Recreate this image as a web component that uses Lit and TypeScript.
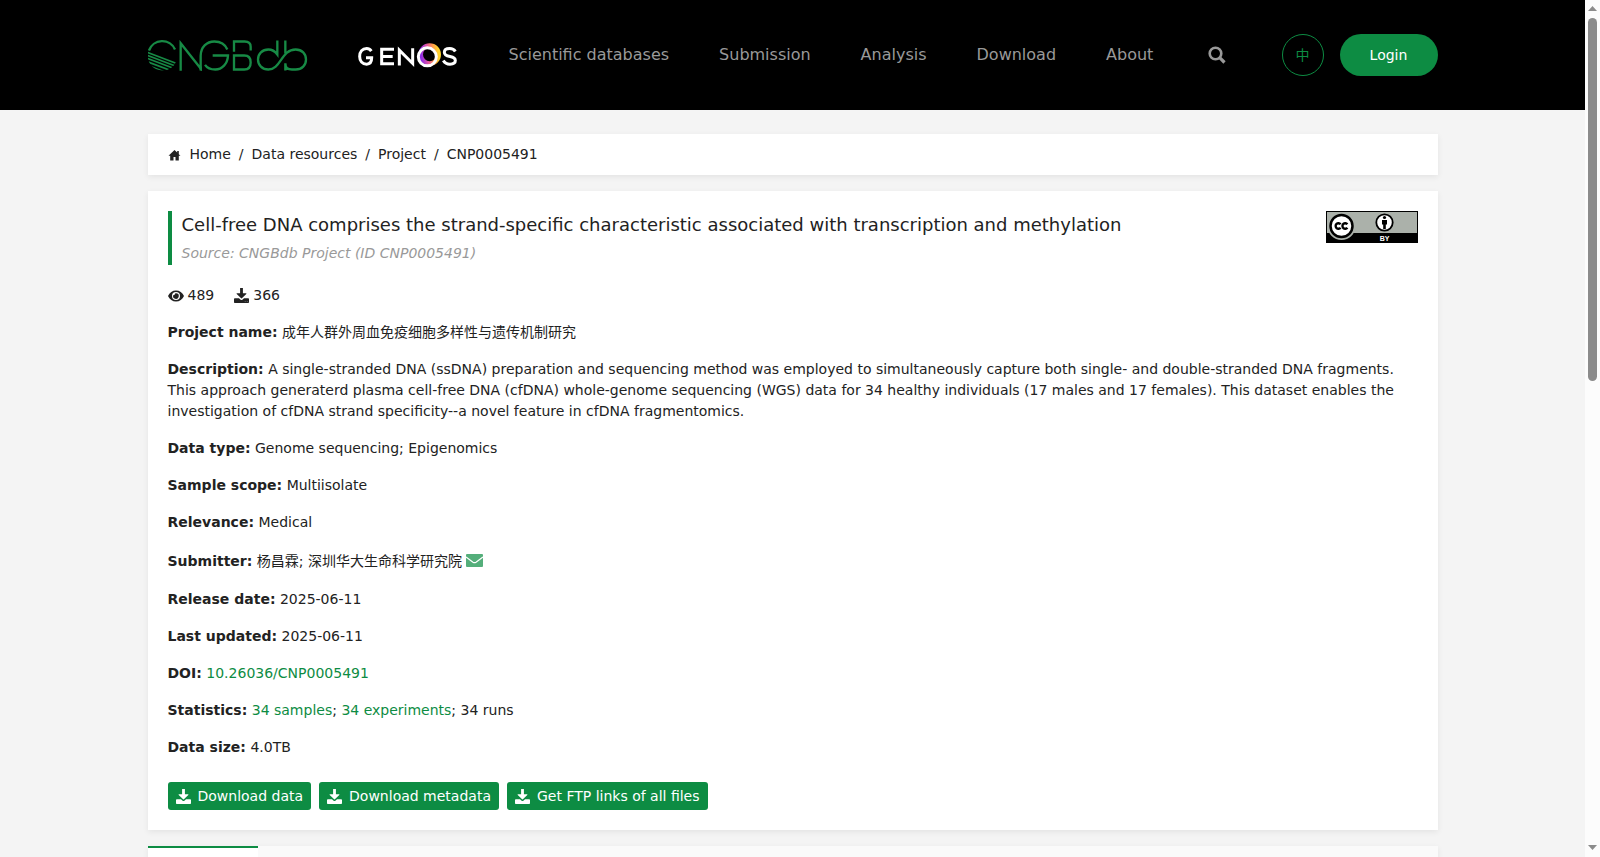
import { LitElement, html, css, svg } from "lit";
import { customElement } from "lit/decorators.js";

const downloadIcon = html`<svg class="icon" viewBox="0 0 16 16" width="15" height="15" aria-hidden="true">
  <path fill="currentColor" d="M6.500 0h3v5.500h3.200c.5 0 .7.5.4.8L8.400 11a.6.6 0 0 1-.8 0L2.900 6.300c-.3-.3-.1-.8.4-.8h3.200z"/>
  <path fill="currentColor" d="M.8 11h4.500l1.500 1.300a1.700 1.700 0 0 0 2.400 0l1.500-1.300h4.500c.4 0 .8.300.8.800v3.400c0 .5-.4.800-.8.800H.8a.8.8 0 0 1-.8-.8v-3.400c0-.5.4-.8.8-.8z"/>
  <path fill="#fff" fill-opacity=".5" d="M11.500 13.800h.8v.8h-.8zM13.700 13.800h.8v.8h-.8z"/>
</svg>`;

const cngbLogo = html`<svg class="logo" viewBox="24 29 480 92" width="160" height="31" role="img" aria-label="CNGBdb">
  <defs><clipPath id="globe"><path d="M23 60H110V90A44 44 0 0 1 66 120A44 44 0 0 1 23 76z"/></clipPath></defs>
  <g fill="none" stroke="#178a45" stroke-width="7">
    <path d="M27 60A42 42 0 0 1 105 57"/>
    <g clip-path="url(#globe)" stroke-width="5">
      ${[65, 74, 83, 93, 104].map((y) => svg`<path d="M20 ${y}L108 ${y + 33}"/>`)}
    </g>
    <path d="M122 121V38L182 114V76C182 50 200 33 223 33C242 33 256 43 262 57"/>
    <path d="M182 108V120M218 75H264C263 100 246 117 226 117C211 117 201 112 195 103"/>
    <path d="M282 64V33H314C326 33 332 39 332 49V60M282 75H313C326 75 332 83 332 96C332 110 325 117 313 117H282Z"/>
    <path d="M412 30V72C404 61 396 57 385 57C367 57 354 70 354 87C354 104 367 117 385 117C423 117 423 57 467 57C486 57 498 70 498 87C498 104 486 117 467 117H456C445 117 436 111 436 98M436 30V68M436 98V120"/>
  </g>
</svg>`;

const genosLogo = html`<svg class="logo" viewBox="654 38 300 74" width="100" height="25" role="img" aria-label="GENOS">
  <defs>
    <linearGradient id="ring" x1="0" y1=".5" x2="1" y2=".4">
      <stop offset="0" stop-color="#8b2be8"/><stop offset=".4" stop-color="#e5579c"/>
      <stop offset=".7" stop-color="#ff9a4a"/><stop offset="1" stop-color="#ffd52e"/>
    </linearGradient>
  </defs>
  <g fill="none" stroke="#fff" stroke-width="9">
    <path d="M694 62C690 56 685 54 680 54C667 54 659 64 659 78C659 92 667 101 680 101C690 101 695 94 695 82H678"/>
    <path d="M762 56H725V100H762M725 78H758M778 105V59L818 99V53"/>
    <path d="M946 63C942 56 936 54 929 54C918 54 913 58 913 65C913 74 920 76 930 78C941 80 946 83 946 90C946 97 939 101 930 101C920 101 914 97 910 90"/>
  </g>
  <circle cx="869" cy="72" r="27" fill="none" stroke="url(#ring)" stroke-width="14"/>
  <circle cx="862" cy="79" r="27" fill="none" stroke="#fff" stroke-width="9"/>
</svg>`;

const ccBadge = html`<svg viewBox="0 0 92 32" width="92" height="32" role="img" aria-label="Creative Commons Attribution">
  <rect width="92" height="32" fill="#000"/><rect x="1" y="1" width="90" height="21" fill="#abb1aa"/>
  <circle cx="15.500" cy="15" r="14" fill="#abb1aa"/><rect y="22" width="1" height="10"/>
  <circle cx="15.500" cy="15" r="11" fill="#fff" stroke="#000" stroke-width="2.500"/>
  <g fill="none" stroke="#000" stroke-width="2.400">
    <path d="M14.600 13.200A2.800 2.800 0 1 0 14.600 16.800M21.400 13.200A2.800 2.800 0 1 0 21.400 16.800"/>
  </g>
  <circle cx="58.500" cy="11.500" r="8.200" fill="#fff" stroke="#000" stroke-width="1.800"/>
  <circle cx="58.500" cy="6.500" r="1.600"/><path d="M56 9h5v4.500h-1.200V18h-2.600v-4.500H56z"/>
  <text x="58.500" y="30" text-anchor="middle" font-family="Liberation Sans, sans-serif" font-weight="bold" font-size="7" fill="#fff">BY</text>
</svg>`;

@customElement("app-root")
export class AppRoot extends LitElement {
  static styles = css`
    :host {
      display: grid;
      grid-template-columns: minmax(0, 1fr) 15px;
      height: 100vh;
      overflow: hidden;
      background: #f4f4f4;
      color: #222;
      font: 14px/21px "DejaVu Sans", "Noto Sans CJK SC", sans-serif;
    }
    * { box-sizing: border-box; }
    a { color: inherit; text-decoration: none; }
    svg { display: block; flex: none; }
    button { font: inherit; cursor: pointer; border: 0; }
    .page { overflow: hidden; }
    .wrap { max-width: 1290px; margin: 0 auto; }
    .header { background: #000; }
    .bar { display: flex; align-items: center; height: 110px; }
    .genos { margin-left: 50px; }
    .nav { display: flex; gap: 50px; margin-left: 51px; font-size: 16px; line-height: 24px; color: #999; }
    .search { margin-left: 55px; padding: 0; background: none; color: #999; }
    .account { display: flex; gap: 16px; margin-left: auto; }
    .lang { width: 42px; height: 42px; padding: 0; border: 1px solid #0d8c43; border-radius: 50%; background: none; color: #0d8c43; }
    .login { width: 98px; height: 42px; border-radius: 21px; background: #0d8c43; color: #fff; }
    .card { background: #fff; box-shadow: 0 2px 6px rgba(0, 0, 0, 0.07); }
    .crumbs { display: flex; align-items: center; gap: 8px; margin-top: 24px; padding: 10px 20px; }
    .home { display: flex; align-items: center; gap: 8px; }
    .project { margin-top: 16px; padding: 20px; }
    .top { display: flex; justify-content: space-between; align-items: flex-start; }
    .heading { border-left: 4px solid #0d8c43; padding: 0 0 2px 10px; }
    .title { margin: 0; font-size: 18px; font-weight: 400; line-height: 28px; }
    .source { margin: 4px 0 0; line-height: 20px; font-style: italic; color: #999; }
    .stats { display: flex; gap: 20px; margin-top: 20px; }
    .stat { display: flex; align-items: center; gap: 4px; }
    .row { margin: 16px 0 0; }
    .person { display: flex; align-items: center; gap: 4px; height: 24px; }
    .green { color: #0d8c43; }
    .mail { opacity: 0.7; }
    .actions { display: flex; gap: 8px; margin-top: 24px; }
    .action { display: flex; align-items: center; gap: 7px; height: 28px; padding: 0 8px; border-radius: 3px; background: #0d8c43; color: #fff; }
    .tabs { margin-top: 16px; height: 60px; background: #fafafa; }
    .tab { width: 110px; height: 40px; border-top: 2px solid #0d8c43; background: #fff; }
    .scroll { display: flex; flex-direction: column; align-items: center; padding: 6px 0 7px; background: #fcfcfc; }
    .thumb { width: 9px; height: 43%; margin-top: 7px; border-radius: 5px; background: #8b8b8b; }
    .down { margin-top: auto; }
  `;

  private row(label: string, value: unknown) {
    return html`<p class="row"><b>${label}:</b> ${value}</p>`;
  }

  render() {
    return html`
      <div class="page">
        <header class="header">
          <div class="wrap bar">
            <a href="#">${cngbLogo}</a>
            <a class="genos" href="#">${genosLogo}</a>
            <nav class="nav">
              ${["Scientific databases", "Submission", "Analysis", "Download", "About"].map((t) => html`<a href="#">${t}</a>`)}
            </nav>
            <button class="search" aria-label="Search">
              <svg viewBox="0 0 18 18" width="18" height="18" fill="none" stroke="currentColor"><circle cx="7.500" cy="7.500" r="5.800" stroke-width="2.600"/><path d="M11.700 11.700L16.500 16.500" stroke-width="3.200"/></svg>
            </button>
            <div class="account">
              <button class="lang">中</button>
              <button class="login">Login</button>
            </div>
          </div>
        </header>
        <main class="wrap">
          <nav class="card crumbs">
            <a class="home" href="#">
              <svg viewBox="0 0 14 14" width="14" height="14"><path fill="#222" d="M6.500 2L.5 7.800H2.200V12.500H5.500V9H7.500V12.500H10.800V7.800H12.500L10.800 6.200V3H9.200V4.600z"/></svg>
              Home
            </a>
            <span>/</span><a href="#">Data resources</a><span>/</span><a href="#">Project</a><span>/</span><span>CNP0005491</span>
          </nav>
          <section class="card project">
            <div class="top">
              <div class="heading">
                <h1 class="title">Cell-free DNA comprises the strand-specific characteristic associated with transcription and methylation</h1>
                <p class="source">Source: CNGBdb Project (ID CNP0005491)</p>
              </div>
              <a href="#">${ccBadge}</a>
            </div>
            <div class="stats">
              <span class="stat">
                <svg viewBox="0 0 16 12" width="16" height="12"><path fill="#222" fill-rule="evenodd" d="M8 .5C4.500.5 1.500 2.500 0 6c1.500 3.500 4.500 5.500 8 5.500s6.500-2 8-5.500C14.500 2.500 11.500.5 8 .5zm0 1.500a4 4 0 1 1 0 8 4 4 0 0 1 0-8zm0 1.200a2.800 2.800 0 1 1-2.600 1.700 1.400 1.400 0 0 0 1.800-1.600c.3-.1.500-.1.800-.1z"/></svg>
                489
              </span>
              <span class="stat">${downloadIcon} 366</span>
            </div>
            ${this.row("Project name", "成年人群外周血免疫细胞多样性与遗传机制研究")}
            ${this.row("Description", "A single-stranded DNA (ssDNA) preparation and sequencing method was employed to simultaneously capture both single- and double-stranded DNA fragments. This approach generaterd plasma cell-free DNA (cfDNA) whole-genome sequencing (WGS) data for 34 healthy individuals (17 males and 17 females). This dataset enables the investigation of cfDNA strand specificity--a novel feature in cfDNA fragmentomics.")}
            ${this.row("Data type", "Genome sequencing; Epigenomics")}
            ${this.row("Sample scope", "Multiisolate")}
            ${this.row("Relevance", "Medical")}
            <div class="row person">
              <span><b>Submitter:</b> 杨昌霖; 深圳华大生命科学研究院</span>
              <a class="green mail" href="#" aria-label="Email the submitter">
                <svg viewBox="0 0 17 14" width="17" height="14"><rect width="17" height="13" rx="1" fill="currentColor"/><path d="M0 3L7 8.200Q8.500 9.200 10 8.200L17 3" fill="none" stroke="#fff" stroke-width="1.200"/></svg>
              </a>
            </div>
            ${this.row("Release date", "2025-06-11")}
            ${this.row("Last updated", "2025-06-11")}
            ${this.row("DOI", html`<a class="green" href="#">10.26036/CNP0005491</a>`)}
            ${this.row("Statistics", html`<a class="green" href="#">34 samples</a>; <a class="green" href="#">34 experiments</a>; 34 runs`)}
            ${this.row("Data size", "4.0TB")}
            <div class="actions">
              ${["Download data", "Download metadata", "Get FTP links of all files"].map((t) => html`<button class="action">${downloadIcon}${t}</button>`)}
            </div>
          </section>
          <div class="card tabs"><div class="tab"></div></div>
        </main>
      </div>
      <div class="scroll" aria-hidden="true">
        <svg viewBox="0 0 9 5" width="9" height="5"><path fill="#8b8b8b" d="M0 5L4.500 0L9 5z"/></svg>
        <div class="thumb"></div>
        <svg class="down" viewBox="0 0 9 5" width="9" height="5"><path fill="#8b8b8b" d="M0 0L4.500 5L9 0z"/></svg>
      </div>
    `;
  }
}
